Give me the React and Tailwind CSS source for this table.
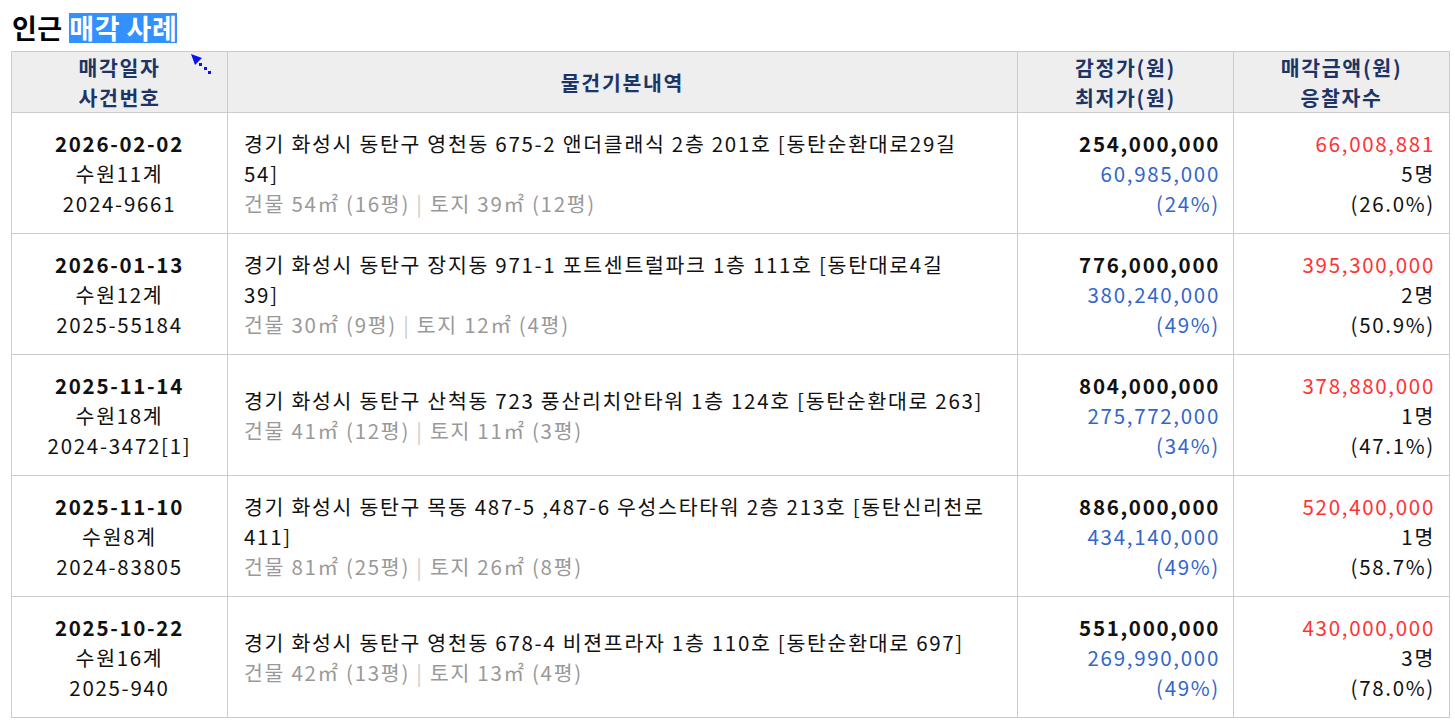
import React from 'react';

const rows = [
  {
    date: '2026-02-02', court: '수원11계', caseNo: '2024-9661',
    addr: ['경기 화성시 동탄구 영천동 675-2 앤더클래식 2층 201호 [동탄순환대로29길', '54]'],
    bld: '건물 54㎡ (16평)', land: '토지 39㎡ (12평)',
    appraisal: '254,000,000', min: '60,985,000', minPct: '(24%)',
    sold: '66,008,881', bidders: '5명', soldPct: '(26.0%)',
  },
  {
    date: '2026-01-13', court: '수원12계', caseNo: '2025-55184',
    addr: ['경기 화성시 동탄구 장지동 971-1 포트센트럴파크 1층 111호 [동탄대로4길', '39]'],
    bld: '건물 30㎡ (9평)', land: '토지 12㎡ (4평)',
    appraisal: '776,000,000', min: '380,240,000', minPct: '(49%)',
    sold: '395,300,000', bidders: '2명', soldPct: '(50.9%)',
  },
  {
    date: '2025-11-14', court: '수원18계', caseNo: '2024-3472[1]',
    addr: ['경기 화성시 동탄구 산척동 723 풍산리치안타워 1층 124호 [동탄순환대로 263]'],
    bld: '건물 41㎡ (12평)', land: '토지 11㎡ (3평)',
    appraisal: '804,000,000', min: '275,772,000', minPct: '(34%)',
    sold: '378,880,000', bidders: '1명', soldPct: '(47.1%)',
  },
  {
    date: '2025-11-10', court: '수원8계', caseNo: '2024-83805',
    addr: ['경기 화성시 동탄구 목동 487-5 ,487-6 우성스타타워 2층 213호 [동탄신리천로', '411]'],
    bld: '건물 81㎡ (25평)', land: '토지 26㎡ (8평)',
    appraisal: '886,000,000', min: '434,140,000', minPct: '(49%)',
    sold: '520,400,000', bidders: '1명', soldPct: '(58.7%)',
  },
  {
    date: '2025-10-22', court: '수원16계', caseNo: '2025-940',
    addr: ['경기 화성시 동탄구 영천동 678-4 비젼프라자 1층 110호 [동탄순환대로 697]'],
    bld: '건물 42㎡ (13평)', land: '토지 13㎡ (4평)',
    appraisal: '551,000,000', min: '269,990,000', minPct: '(49%)',
    sold: '430,000,000', bidders: '3명', soldPct: '(78.0%)',
  },
];

// the little dotted pointer sitting on the header
function Cursor() {
  return (
    <svg className="absolute left-[189px] top-[52px]" width="26" height="26" viewBox="0 0 26 26">
      <polygon points="2,2 13,6 6,13" fill="#1010ee" />
      <rect x="10" y="11" width="3" height="3" fill="#1010ee" />
      <rect x="15" y="15" width="3" height="3" fill="#1010ee" />
      <rect x="19" y="19" width="3" height="3" fill="#1010ee" />
    </svg>
  );
}

export default function App() {
  return (
    <div
      className="relative bg-white text-[20.5px] leading-[30px] tracking-[1.7px] text-[#111] px-[11px] pt-[13px]"
      style={{ fontFamily: '"Noto Sans CJK KR", sans-serif' }}
    >
      <h2 className="text-[27px] leading-[30px] tracking-[0.5px] font-bold text-black mb-[8px] pl-[1px] h-[30px]">
        인근 <span className="inline-block leading-[30px] h-[30px] bg-[#3390ff] text-white">매각 사례</span>
      </h2>
      <Cursor />
      <table className="w-[1438px] border-collapse table-fixed">
        <colgroup>
          <col className="w-[216px]" />
          <col className="w-[790px]" />
          <col className="w-[216px]" />
          <col className="w-[216px]" />
        </colgroup>
        <thead>
          <tr className="bg-[#eeeeee] text-[#1d3466] h-[61px]">
            <th className="border border-[#cccccc] text-center font-bold align-middle">
              매각일자<br />사건번호
            </th>
            <th className="border border-[#cccccc] text-center font-bold align-middle">물건기본내역</th>
            <th className="border border-[#cccccc] text-center font-bold align-middle">
              감정가(원)<br />최저가(원)
            </th>
            <th className="border border-[#cccccc] text-center font-bold align-middle">
              매각금액(원)<br />응찰자수
            </th>
          </tr>
        </thead>
        <tbody>
          {rows.map((r) => (
            <tr key={r.caseNo} className="h-[121px]">
              <td className="border border-[#cccccc] text-center align-middle">
                <div className="font-bold">{r.date}</div>
                <div>{r.court}</div>
                <div>{r.caseNo}</div>
              </td>
              <td className="border border-[#cccccc] align-middle pl-[16px] pr-[8px]">
                {r.addr.map((line) => (
                  <div key={line} className="whitespace-nowrap">{line}</div>
                ))}
                <div className="text-[#999999] whitespace-nowrap">
                  {r.bld} <span className="text-[#cccccc]">|</span> {r.land}
                </div>
              </td>
              <td className="border border-[#cccccc] text-right align-middle pr-[13px]">
                <div className="font-bold">{r.appraisal}</div>
                <div className="text-[#3366cc]">{r.min}</div>
                <div className="text-[#3366cc]">{r.minPct}</div>
              </td>
              <td className="border border-[#cccccc] text-right align-middle pr-[14px]">
                <div className="text-[#ff3333]">{r.sold}</div>
                <div>{r.bidders}</div>
                <div>{r.soldPct}</div>
              </td>
            </tr>
          ))}
        </tbody>
      </table>
    </div>
  );
}
